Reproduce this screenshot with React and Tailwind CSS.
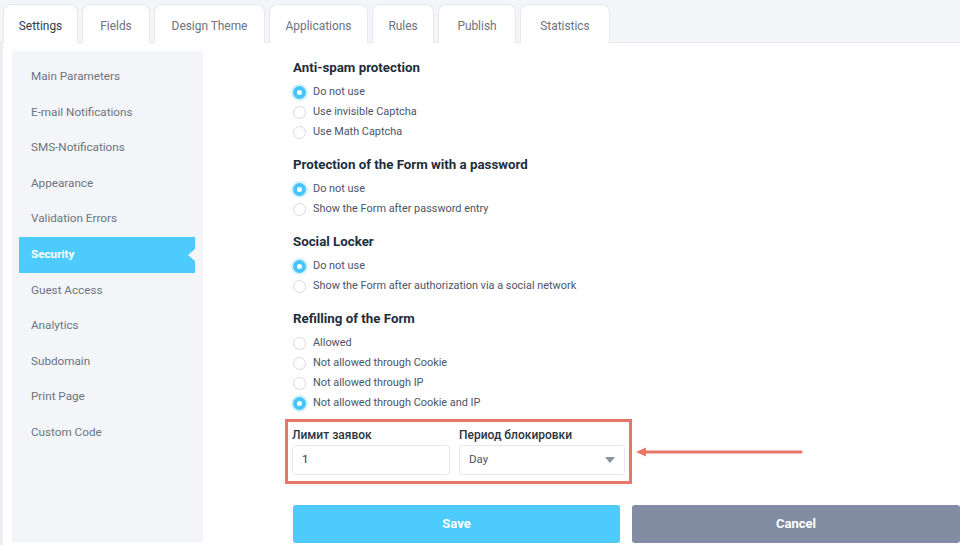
import { useState } from 'react'

const tabs = ['Settings', 'Fields', 'Design Theme', 'Applications', 'Rules', 'Publish', 'Statistics']

const menu = [
  'Main Parameters', 'E-mail Notifications', 'SMS-Notifications', 'Appearance',
  'Validation Errors', 'Security', 'Guest Access', 'Analytics', 'Subdomain',
  'Print Page', 'Custom Code',
]

const groups = [
  { title: 'Anti-spam protection', options: ['Do not use', 'Use invisible Captcha', 'Use Math Captcha'], value: 0 },
  { title: 'Protection of the Form with a password', options: ['Do not use', 'Show the Form after password entry'], value: 0 },
  { title: 'Social Locker', options: ['Do not use', 'Show the Form after authorization via a social network'], value: 0 },
  { title: 'Refilling of the Form', options: ['Allowed', 'Not allowed through Cookie', 'Not allowed through IP', 'Not allowed through Cookie and IP'], value: 3 },
]

function Radio({ checked, label }) {
  return (
    <div className="flex items-center h-5 gap-[7px]">
      {checked
        ? <span className="w-[13px] h-[13px] rounded-full bg-[#45c5fb] ring-2 ring-[#d6f1fe] flex items-center justify-center">
            <span className="w-[5px] h-[5px] rounded-full bg-white" />
          </span>
        : <span className="w-[13px] h-[13px] rounded-full bg-white border border-[#d5dae1]" />}
      <span className="text-[10.9px] text-[#4a5568]">{label}</span>
    </div>
  )
}

export default function App() {
  const [active] = useState('Security')

  return (
    <div className="w-[960px] h-[545px] overflow-hidden bg-white flex flex-col" style={{ fontFamily: 'Roboto, "Liberation Sans", sans-serif' }}>
      {/* Tabs */}
      <div className="h-[43px] bg-[#f4f5f9] border-b border-[#e6e8ee] flex items-end pl-[3px] gap-[4px] shrink-0">
        {tabs.map((t, i) => (
          <div
            key={t}
            className={`h-[39px] -mb-px pt-[5px] flex items-center px-[13px] rounded-t-[8px] border border-b-0 border-[#e6e8ee] text-[11.9px] ${i === 0 ? 'bg-white text-[#2f3d4c]' : 'bg-white text-[#6b7480]'}`}
            style={{ minWidth: [75, 68, 111, 99, 62, 78, 90][i] }}
          >
            <span className="w-full text-center">{t}</span>
          </div>
        ))}
      </div>

      <div className="flex flex-1 min-h-0 border-l-[3px] border-[#eceef2]">
        {/* Sidebar */}
        <div className="w-[191px] ml-[9px] mt-[8px] mb-[3px] bg-[#f4f5f9] pt-[8px] shrink-0">
          {menu.map(m => (
            <div
              key={m}
              className={`relative h-[35.6px] flex items-center pl-[12px] ml-[7px] mr-[8px] text-[11.7px] ${m === active ? 'bg-[#4ccbfc] text-white font-bold' : 'text-[#6b7480]'}`}
            >
              {m}
              {m === active && (
                <span className="absolute right-0 top-1/2 -translate-y-1/2 w-0 h-0 border-y-[6px] border-y-transparent border-r-[7px] border-r-[#f4f5f9]" />
              )}
            </div>
          ))}
        </div>

        {/* Content */}
        <div className="flex-1 pl-[90px] pt-[16px]">
          {groups.map(g => (
            <div key={g.title} className="mb-[14px]">
              <h3 className="text-[13.3px] font-bold text-[#1e2d3b] leading-[18px] mb-[5px]">{g.title}</h3>
              {g.options.map((o, i) => <Radio key={o} checked={i === g.value} label={o} />)}
            </div>
          ))}

          <div className="flex items-center -mt-[8px]">
            <div className="w-[347px] h-[65px] border-[3px] border-[#e8756a] -ml-[8px] pl-[4px] pr-[3px] pt-[5px] flex gap-[9px]">
              <div className="w-[158px]">
                <div className="text-[12px] font-medium text-[#2a3542] h-[17px] leading-[17px] mb-[1px]">Лимит заявок</div>
                <div className="h-[30px] border border-[#e6e8ee] rounded-[3px] flex items-center px-[9px] text-[11.5px] text-[#2a3542]">1</div>
              </div>
              <div className="w-[166px]">
                <div className="text-[12px] font-medium text-[#2a3542] h-[17px] leading-[17px] mb-[1px]">Период блокировки</div>
                <div className="h-[30px] border border-[#e6e8ee] rounded-[3px] flex items-center justify-between px-[9px] text-[11.5px] text-[#4a5568]">
                  Day
                  <svg width="10" height="6" viewBox="0 0 10 6"><path d="M0 0h10L5 6z" fill="#8a929e" /></svg>
                </div>
              </div>
            </div>
            <svg width="170" height="12" viewBox="0 0 170 12" className="ml-[3px]">
              <path d="M10 6H166" stroke="#e8756a" strokeWidth="3" strokeLinecap="round" />
              <path d="M1 6L11 1.5V10.5z" fill="#e8756a" />
            </svg>
          </div>

          <div className="flex gap-[12px] mt-[21px]">
            <button className="w-[327px] h-[38px] rounded-[3px] bg-[#4ccbfc] text-white font-bold text-[13px]">Save</button>
            <button className="w-[328px] h-[38px] rounded-[3px] bg-[#828ca3] text-white font-bold text-[13px]">Cancel</button>
          </div>
        </div>
      </div>
    </div>
  )
}
